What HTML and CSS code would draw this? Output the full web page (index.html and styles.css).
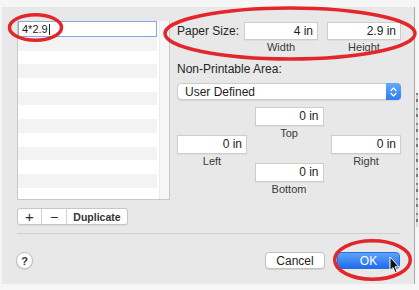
FILE: index.html
```html
<!DOCTYPE html>
<html>
<head>
<meta charset="utf-8">
<link rel="stylesheet" href="styles.css">
</head>
<body>
<div class="dialog">
  <div class="main">
    <div class="list">
      <div class="list-body">
        <div class="name-field">4*2.9<span class="caret"></span></div>
        <div class="rows"></div>
      </div>
      <div class="scroll"></div>
    </div>
    <div class="settings">
      <div class="size-row">
        <div class="size-label">Paper Size:</div>
        <div class="field-col">
          <div class="field w74">4 in</div>
          <div class="sub">Width</div>
        </div>
        <div class="field-col">
          <div class="field w74">2.9 in</div>
          <div class="sub">Height</div>
        </div>
      </div>
      <div class="np-label">Non-Printable Area:</div>
      <div class="select">
        <span class="select-text">User Defined</span>
        <span class="stepper">
          <svg width="9" height="12" viewBox="0 0 9 12"><path d="M2 4.5 L4.5 2 L7 4.5 M2 7.5 L4.5 10 L7 7.5" fill="none" stroke="#fff" stroke-width="1.3" stroke-linecap="round" stroke-linejoin="round"/></svg>
        </span>
      </div>
      <div class="margins">
        <div class="mcol side">
          <div class="field w70">0 in</div>
          <div class="sub">Left</div>
        </div>
        <div class="mcol mid">
          <div class="field w69">0 in</div>
          <div class="sub">Top</div>
          <div class="field w69 bottom-field">0 in</div>
          <div class="sub">Bottom</div>
        </div>
        <div class="mcol side">
          <div class="field w70">0 in</div>
          <div class="sub">Right</div>
        </div>
      </div>
    </div>
  </div>
  <div class="seg">
    <div class="seg-btn plus">+</div>
    <div class="seg-btn minus">−</div>
    <div class="seg-btn dup">Duplicate</div>
  </div>
  <div class="sep"></div>
  <div class="footer">
    <div class="help">?</div>
    <div class="actions">
      <div class="btn cancel">Cancel</div>
      <div class="btn ok">OK</div>
    </div>
  </div>
</div>
<div class="edge"></div>
<svg class="marks" width="419" height="290" viewBox="0 0 419 290">
  <ellipse cx="35.5" cy="27.5" rx="26" ry="12.8" fill="none" stroke="#e3262b" stroke-width="3.5"/>
  <ellipse cx="290" cy="33.5" rx="125" ry="25.5" fill="none" stroke="#e3262b" stroke-width="3.5"/>
  <ellipse cx="372.5" cy="260" rx="37.8" ry="19.3" fill="none" stroke="#e3262b" stroke-width="3.5"/>
  <path d="M390 257 L390 270.5 L393 267.6 L395.2 272.6 L397.2 271.7 L395 266.8 L399 266.8 Z" fill="#111" stroke="#fff" stroke-width="1"/>
</svg>
</body>
</html>
```
FILE: styles.css
```css
* { box-sizing: border-box; }
html, body { margin: 0; padding: 0; }
body {
  width: 419px;
  height: 290px;
  background: #f6f6f6;
  font-family: "Liberation Sans", Arial, sans-serif;
  color: #252525;
  position: relative;
  overflow: hidden;
}
.dialog {
  margin: 7px 0 0 2px;
  width: 413px;
  height: 277px;
  background: #e8e8e8;
  padding: 14px 0 0 15px;
  border-right: 1px solid #a9a9a9;
}
.main {
  display: flex;
  gap: 7px;
  height: 179px;
}
.list {
  width: 153px;
  height: 179px;
  border: 1px solid #c9c9c9;
  border-top: none;
  display: flex;
  background: #fff;
}
.list-body {
  width: 139px;
  display: flex;
  flex-direction: column;
}
.name-field {
  height: 16px;
  border: 1.5px solid #86a8e2;
  background: #fff;
  font-size: 11px;
  line-height: 13px;
  padding-left: 3px;
  color: #222;
  display: flex;
  align-items: center;
}
.caret {
  display: inline-block;
  width: 1px;
  height: 11px;
  background: #222;
  margin-left: 1px;
}
.rows {
  flex: 1;
  background: repeating-linear-gradient(#f3f3f3 0 13.7px, #ffffff 13.7px 27.4px);
}
.scroll {
  flex: 1;
  margin-left: 2px;
  background: #f7f7f7;
  border-left: 1px solid #ececec;
}
.settings {
  width: 224px;
  display: flex;
  flex-direction: column;
}
.size-row {
  display: flex;
  margin-top: 1px;
}
.size-label {
  width: 67px;
  font-size: 12px;
  line-height: 18px;
}
.field-col {
  display: flex;
  flex-direction: column;
  align-items: center;
}
.field-col + .field-col { margin-left: 9px; }
.field {
  height: 18px;
  background: #fff;
  border: 1px solid #cdcdcd;
  box-shadow: 0 1px 0 rgba(0,0,0,0.04);
  font-size: 12px;
  line-height: 16px;
  text-align: right;
  padding-right: 4px;
  color: #1e1e1e;
}
.w74 { width: 74px; }
.w70 { width: 70px; height: 19px; line-height: 17px; }
.w69 { width: 69px; height: 19px; line-height: 17px; }
.sub {
  font-size: 11px;
  line-height: 14px;
  color: #3a3a3a;
  text-align: center;
}
.np-label {
  font-size: 12px;
  line-height: 14px;
  margin-top: 8px;
}
.select {
  margin-top: 7px;
  height: 17px;
  background: #fff;
  border: 1px solid #cbcbcb;
  border-radius: 4px;
  display: flex;
  align-items: center;
  justify-content: space-between;
  box-shadow: 0 1px 1px rgba(0,0,0,0.08);
}
.select-text {
  font-size: 12px;
  padding-left: 7px;
  color: #1e1e1e;
}
.stepper {
  width: 15px;
  height: 17px;
  margin-right: -1px;
  border-radius: 0 4px 4px 0;
  background: linear-gradient(#62a8fb, #2d7ef2);
  display: flex;
  align-items: center;
  justify-content: center;
}
.margins {
  display: flex;
  margin-top: 7px;
}
.mcol {
  display: flex;
  flex-direction: column;
  align-items: center;
}
.side { width: 70px; padding-top: 28px; }
.mid { width: 84px; }
.bottom-field { margin-top: 23px; }
.seg {
  margin-top: 8px;
  display: flex;
  width: 111px;
  height: 17px;
  background: #fff;
  border: 1px solid #c6c6c6;
  border-radius: 3px;
  box-shadow: 0 1px 1px rgba(0,0,0,0.06);
}
.seg-btn {
  display: flex;
  align-items: center;
  justify-content: center;
  color: #2b2b2b;
}
.plus { width: 24px; border-right: 1px solid #d2d2d2; font-size: 15px; }
.minus { width: 25px; border-right: 1px solid #d2d2d2; font-size: 14px; }
.dup { flex: 1; font-size: 10.5px; font-weight: bold; color: #333; }
.sep {
  margin-top: 8px;
  width: 383px;
  height: 1px;
  background: #d0d0d0;
}
.footer {
  display: flex;
  align-items: center;
  justify-content: space-between;
  width: 384px;
  margin-top: 18px;
  margin-left: -1px;
}
.help {
  width: 17px;
  height: 17px;
  border-radius: 50%;
  background: #fff;
  border: 1px solid #bdbdbd;
  box-shadow: 0 1px 1px rgba(0,0,0,0.1);
  font-size: 11px;
  font-weight: bold;
  display: flex;
  align-items: center;
  justify-content: center;
  color: #333;
}
.actions { display: flex; gap: 12px; }
.btn {
  height: 17px;
  border-radius: 4px;
  font-size: 12px;
  display: flex;
  align-items: center;
  justify-content: center;
}
.cancel {
  width: 60px;
  background: #fff;
  border: 1px solid #c2c2c2;
  box-shadow: 0 1px 1px rgba(0,0,0,0.1);
  color: #222;
}
.ok {
  width: 63px;
  background: linear-gradient(#5ea3f9, #1f6cf0);
  color: #fff;
  border: 1px solid #2a6fe0;
}
.edge {
  position: absolute;
  left: 416px;
  top: 93px;
  width: 2px;
  height: 134px;
  background: repeating-linear-gradient(#555 0 2px, #bbb 2px 6px, #444 6px 9px, #ccc 9px 15px);
  opacity: 0.7;
}
.marks {
  position: absolute;
  left: 0;
  top: 0;
}
```
